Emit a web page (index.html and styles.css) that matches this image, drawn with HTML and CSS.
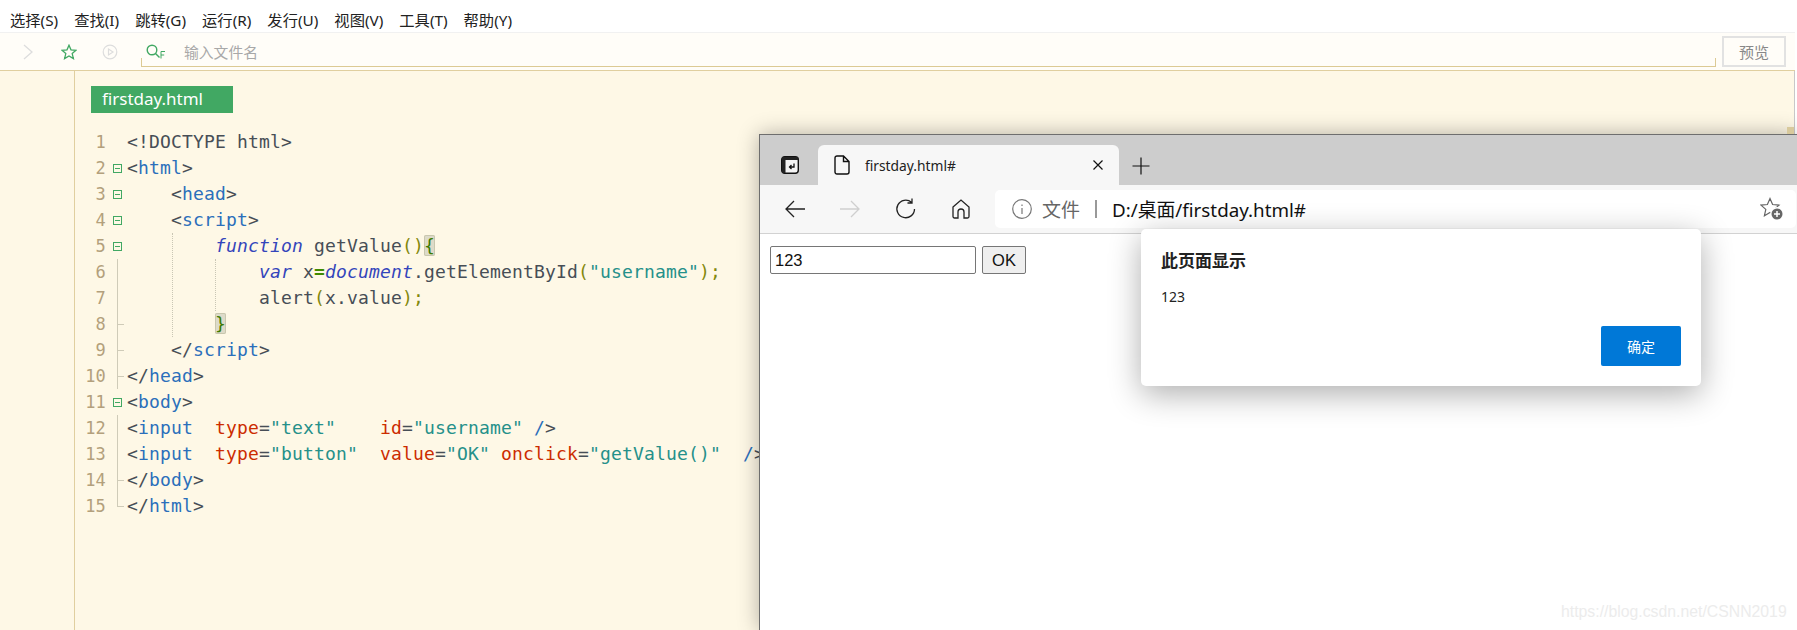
FILE: index.html
```html
<!DOCTYPE html>
<html lang="zh-CN">
<head>
  <meta charset="UTF-8" />
  <title>firstday.html</title>
  <link rel="stylesheet" href="styles.css">
</head>
<body>
  <div class="ide">
    <nav class="menu">
      <span>选择(S)</span><span>查找(I)</span><span>跳转(G)</span><span>运行(R)</span>
      <span>发行(U)</span><span>视图(V)</span><span>工具(T)</span><span>帮助(Y)</span>
    </nav>

    <div class="toolbar">
      <svg class="tool-chevron" width="10" height="16" viewBox="0 0 10 16"><path d="M1 1l8 7-8 7" /></svg>
      <svg class="tool-star" width="16" height="16" viewBox="0 0 16 16"><path d="M8 1.200l2 4.600 5 .5-3.800 3.300 1.200 5-4.400-2.700-4.400 2.700 1.200-5L1 6.300l5-.5z" /></svg>
      <svg class="tool-play" width="16" height="16" viewBox="0 0 16 16"><circle cx="8" cy="8" r="6.800" /><path d="M6.500 5v6L11 8z" /></svg>
      <div class="search">
        <svg class="search-icon" width="20" height="16" viewBox="0 0 20 16"><circle cx="6" cy="6" r="4.800" /><path d="M9.500 9.500l4 4" /><path class="search-f" d="M19 7.500h-4v7M15 11h3.200" /></svg>
        <span class="search-text">输入文件名</span>
      </div>
      <button class="preview">预览</button>
    </div>

    <div class="editor">
      <div class="filetab">firstday.html</div>
      <div class="code">
        <i class="guide guide-a"></i>
        <i class="guide guide-b"></i>
        <div class="row"><span class="ln">1</span><span class="fold"></span><span class="src">&lt;!DOCTYPE html&gt;</span></div>
        <div class="row"><span class="ln">2</span><span class="fold open"></span><span class="src">&lt;<b class="t">html</b>&gt;</span></div>
        <div class="row"><span class="ln">3</span><span class="fold open"></span><span class="src">    &lt;<b class="t">head</b>&gt;</span></div>
        <div class="row"><span class="ln">4</span><span class="fold open"></span><span class="src">    &lt;<b class="t">script</b>&gt;</span></div>
        <div class="row"><span class="ln">5</span><span class="fold open"></span><span class="src">        <b class="k">function</b> getValue<b class="o">()</b><b class="brace">{</b></span></div>
        <div class="row"><span class="ln">6</span><span class="fold bar"></span><span class="src">            <b class="k">var</b> x<b class="eq">=</b><b class="k">document</b>.getElementById<b class="o">(</b><b class="s">"username"</b><b class="o">);</b></span></div>
        <div class="row"><span class="ln">7</span><span class="fold bar"></span><span class="src">            alert<b class="o">(</b>x.value<b class="o">);</b></span></div>
        <div class="row"><span class="ln">8</span><span class="fold bar tick"></span><span class="src">        <b class="brace">}</b></span></div>
        <div class="row"><span class="ln">9</span><span class="fold bar tick"></span><span class="src">    &lt;/<b class="t">script</b>&gt;</span></div>
        <div class="row"><span class="ln">10</span><span class="fold bar tick"></span><span class="src">&lt;/<b class="t">head</b>&gt;</span></div>
        <div class="row"><span class="ln">11</span><span class="fold open"></span><span class="src">&lt;<b class="t">body</b>&gt;</span></div>
        <div class="row"><span class="ln">12</span><span class="fold bar"></span><span class="src">&lt;<b class="t">input</b>  <b class="a">type</b>=<b class="s">"text"</b>    <b class="a">id</b>=<b class="s">"username"</b> <b class="t">/</b>&gt;</span></div>
        <div class="row"><span class="ln">13</span><span class="fold bar"></span><span class="src">&lt;<b class="t">input</b>  <b class="a">type</b>=<b class="s">"button"</b>  <b class="a">value</b>=<b class="s">"OK"</b> <b class="a">onclick</b>=<b class="s">"getValue()"</b>  <b class="t">/</b>&gt;</span></div>
        <div class="row"><span class="ln">14</span><span class="fold bar tick"></span><span class="src">&lt;/<b class="t">body</b>&gt;</span></div>
        <div class="row"><span class="ln">15</span><span class="fold end tick"></span><span class="src">&lt;/<b class="t">html</b>&gt;</span></div>
      </div>
    </div>
  </div>

  <!-- browser window on top of the editor -->
  <div class="browser">
    <div class="tabstrip">
      <svg class="tab-actions" width="18" height="18" viewBox="0 0 18 18">
        <rect x="0.700" y="0.700" width="16.600" height="16.600" rx="3" fill="#f4f4f4" stroke="#111" stroke-width="1.400" />
        <path d="M1 1h16v3H1zM1 4h3.500v13H1z" fill="#222" />
        <path d="M13 7.500v3.500H8.500M10.500 9l-2 2 2 2" fill="none" stroke="#111" stroke-width="1.300" />
      </svg>
      <div class="tab">
        <svg class="doc" width="16" height="20" viewBox="0 0 16 20"><path d="M1 3a2 2 0 0 1 2-2h6.500L15 6.500V17a2 2 0 0 1-2 2H3a2 2 0 0 1-2-2zM9.500 1v5.500H15" /></svg>
        <span class="tab-title">firstday.html#</span>
        <svg class="tab-close" width="10" height="10" viewBox="0 0 10 10"><path d="M.5.500l9 9M9.500.500l-9 9" /></svg>
      </div>
      <svg class="tab-new" width="18" height="18" viewBox="0 0 18 18"><path d="M9 .500v17M.500 9h17" /></svg>
    </div>

    <div class="navbar">
      <svg class="nav-icon" width="20" height="18" viewBox="0 0 20 18"><path d="M20 9H1M9 1L1 9l8 8" /></svg>
      <svg class="nav-icon nav-off" width="20" height="18" viewBox="0 0 20 18"><path d="M0 9h19M11 1l8 8-8 8" /></svg>
      <svg class="nav-icon" width="22" height="22" viewBox="0 0 22 22"><path d="M19.500 11A8.800 8.800 0 1 1 16.500 4.300M17 .500v4.500h-4.500" /></svg>
      <svg class="nav-icon" width="18" height="20" viewBox="0 0 18 20"><path d="M1 8l8-7 8 7v9.500a1.500 1.500 0 0 1-1.500 1.500H12v-6a3 3 0 0 0-6 0v6H2.500A1.500 1.500 0 0 1 1 17.500z" /></svg>
      <div class="address">
        <svg class="info" width="20" height="20" viewBox="0 0 20 20"><circle cx="10" cy="10" r="9.300" /><path d="M10 9v6M10 5.500v1.500" /></svg>
        <span class="scheme">文件</span>
        <i class="divider"></i>
        <span class="url">D:/桌面/firstday.html#</span>
        <svg class="fav" width="24" height="24" viewBox="0 0 24 24">
          <path d="M10 1.500l2.600 6 6.400.6-4.800 4.300 1.400 6.300L10 15.400l-5.600 3.300 1.400-6.300L1 8.100l6.400-.6z" fill="none" stroke="#666" stroke-width="1.200" />
          <circle cx="17" cy="17" r="7" fill="#fff" />
          <circle cx="17" cy="17" r="5.500" fill="#666" />
          <path d="M17 14v6M14 17h6" stroke="#fff" stroke-width="1.500" />
        </svg>
      </div>
    </div>

    <div class="page">
      <input class="page-input" type="text" value="123" />
      <button class="page-button">OK</button>
    </div>

    <div class="dialog">
      <div class="dialog-title">此页面显示</div>
      <div class="dialog-text">123</div>
      <div class="dialog-actions"><button class="dialog-ok">确定</button></div>
    </div>
  </div>

  <span class="scroll-bit"></span>
  <span class="watermark">https://blog.csdn.net/CSNN2019</span>
</body>
</html>
```
FILE: styles.css
```css
html, body {
  margin: 0;
  height: 630px;
  overflow: hidden;
  background: #fff;
}
body {
  position: relative;
  font-family: "Noto Sans", "Noto Sans CJK SC", sans-serif;
}
.ide {
  width: 1795px;
  height: 630px;
  display: flex;
  flex-direction: column;
}

/* menu */
.menu {
  height: 33px;
  flex: none;
  display: flex;
  align-items: center;
  gap: 16px;
  padding: 6px 0 0 10px;
  box-sizing: border-box;
  background: #fff;
  border-bottom: 1px solid #f1f1f1;
  font-size: 15.300px;
  color: #222;
}

/* toolbar */
.toolbar {
  height: 37px;
  flex: none;
  display: flex;
  align-items: center;
  padding-left: 23px;
  background: #fffdf8;
  border-bottom: 1px solid #e0cf9f;
}
.tool-chevron path {
  fill: none;
  stroke: #ddd;
  stroke-width: 1.300;
}
.tool-star {
  margin-left: 28px;
}
.tool-star path {
  fill: none;
  stroke: #41a863;
  stroke-width: 1.300;
}
.tool-play {
  margin-left: 25px;
}
.tool-play circle, .tool-play path {
  fill: none;
  stroke: #ddd;
  stroke-width: 1.200;
}
.search {
  margin-left: 23px;
  width: 1573px;
  height: 8px;
  align-self: flex-end;
  margin-bottom: 3px;
  position: relative;
  display: flex;
  border: 1px solid #dcca94;
  border-top: none;
}
.search-icon {
  position: absolute;
  left: 4px;
  top: -14px;
}
.search-icon circle, .search-icon path {
  fill: none;
  stroke: #41a863;
  stroke-width: 1.400;
}
.search-icon .search-f {
  stroke-width: 1;
}
.search-text {
  position: absolute;
  left: 42px;
  top: -19px;
  font-size: 14.800px;
  line-height: 26px;
  white-space: nowrap;
  color: #a8a8a8;
}
.preview {
  width: 64px;
  height: 31px;
  margin-left: 6px;
  padding: 0;
  background: #fffdf8;
  border: 2px solid #e2e2e2;
  font: 15px "Noto Sans CJK SC", sans-serif;
  color: #888;
}

/* editor */
.editor {
  flex: 1;
  padding: 15px 0 0 91px;
  position: relative;
  background: #fef8e6;
  border-right: 1px solid #c8c8c8;
}
.editor::before {
  content: "";
  position: absolute;
  left: 74px;
  top: 0;
  bottom: 0;
  border-left: 1px solid #e0cf9f;
}
.filetab {
  width: 131px;
  height: 27px;
  padding-left: 11px;
  background: #41a863;
  color: #fff;
  font-size: 17px;
  line-height: 26px;
}
.code {
  position: relative;
  margin: 16px 0 0 -91px;
  font-family: "DejaVu Sans Mono", monospace;
  font-size: 18px;
  letter-spacing: 0.160px;
  color: #474e56;
}
.row {
  display: flex;
  height: 26px;
  line-height: 26px;
}
.ln {
  width: 106px;
  flex: none;
  text-align: right;
  color: #b3a07c;
  font-size: 17px;
}
.fold {
  width: 21px;
  flex: none;
  position: relative;
}
.src {
  white-space: pre;
}
.src b {
  font-weight: normal;
}
.t { color: #2b6fbb; }
.a { color: #cc2c00; }
.s { color: #25908a; }
.k { color: #3345bb; font-style: italic; }
.o { color: #83880c; }
.src .eq { color: #3f8a00; font-weight: bold; }
.brace {
  color: #3c7a00;
  background: #dddbc9;
  border-radius: 2px;
  box-shadow: inset 0 0 0 1px #c9c7ae;
}

/* fold markers */
.open::before {
  content: "";
  position: absolute;
  left: 7px;
  top: 9px;
  width: 7px;
  height: 7px;
  border: 1px solid #41a863;
}
.open::after {
  content: "";
  position: absolute;
  left: 9px;
  top: 13px;
  width: 5px;
  border-top: 1px solid #41a863;
}
.bar::before {
  content: "";
  position: absolute;
  left: 11px;
  top: 0;
  bottom: 0;
  border-left: 1px solid #cfcbb8;
}
.end::before {
  content: "";
  position: absolute;
  left: 11px;
  top: 0;
  height: 13px;
  border-left: 1px solid #cfcbb8;
}
.tick::after {
  content: "";
  position: absolute;
  left: 11px;
  top: 13px;
  width: 7px;
  border-top: 1px solid #cfcbb8;
}
.guide {
  position: absolute;
  border-left: 1px dotted #c9c6b4;
}
.guide-a {
  left: 172px;
  top: 104px;
  height: 104px;
}
.guide-b {
  left: 215px;
  top: 130px;
  height: 52px;
}

/* browser window */
.browser {
  position: absolute;
  left: 759px;
  top: 134px;
  right: 0;
  bottom: 0;
  background: #fff;
  border-left: 1px solid #6e6e6e;
  border-top: 1px solid #6e6e6e;
  box-shadow: 0 0 20px rgba(0, 0, 0, 0.3);
}
.tabstrip {
  height: 50px;
  display: flex;
  align-items: flex-end;
  background: #cdcdcd;
}
.tab-actions {
  margin: 0 0 11px 21px;
}
.tab {
  width: 301px;
  height: 40px;
  margin-left: 19px;
  display: flex;
  align-items: center;
  background: #f7f7f7;
  border-radius: 6px 6px 0 0;
  box-sizing: border-box;
  padding: 0 16px;
}
.doc path {
  fill: none;
  stroke: #111;
  stroke-width: 1.400;
}
.tab-title {
  margin-left: 15px;
  flex: 1;
  font-size: 13.800px;
  color: #222;
}
.tab-close path, .tab-new path {
  fill: none;
  stroke: #111;
  stroke-width: 1.200;
}
.tab-new {
  margin: 0 0 10px 13px;
}
.navbar {
  height: 47px;
  display: flex;
  align-items: center;
  padding-bottom: 1px;
  background: #f7f7f7;
  border-bottom: 1px solid #d2d2d2;
}
.nav-icon {
  margin-left: 35px;
  flex: none;
}
.nav-icon:first-child {
  margin-left: 25px;
}
.nav-icon path {
  fill: none;
  stroke: #222;
  stroke-width: 1.300;
}
.nav-off path {
  stroke: #cfcfcf;
}
.address {
  margin: 0 1px 0 25px;
  height: 38px;
  flex: 1;
  display: flex;
  align-items: center;
  background: #fff;
  border-radius: 5px;
  padding-left: 17px;
  position: relative;
}
.info circle, .info path {
  fill: none;
  stroke: #777;
  stroke-width: 1.200;
}
.scheme {
  margin-left: 10px;
  font-size: 19px;
  color: #666;
}
.divider {
  width: 2px;
  height: 18px;
  margin: 0 15px;
  background: #999;
}
.url {
  font-size: 18.800px;
  color: #111;
  white-space: nowrap;
}
.fav {
  position: absolute;
  right: 12px;
  top: 7px;
}
.page {
  display: flex;
  padding: 12px 0 0 10px;
  gap: 6px;
}
.page-input {
  width: 206px;
  height: 28px;
  box-sizing: border-box;
  padding: 0 4px;
  border: 1px solid #767676;
  border-radius: 2px;
  font: 16.500px "Liberation Sans", sans-serif;
  color: #111;
}
.page-button {
  width: 44px;
  height: 28px;
  padding: 0;
  background: #efefef;
  border: 1px solid #767676;
  border-radius: 2px;
  font: 16.500px "Liberation Sans", sans-serif;
  color: #111;
}
.dialog {
  position: absolute;
  left: 381px;
  top: 94px;
  width: 560px;
  height: 157px;
  box-sizing: border-box;
  padding: 20px;
  background: #fff;
  border-radius: 5px;
  box-shadow: 0 8px 32px rgba(0, 0, 0, 0.32);
}
.dialog-title {
  font-size: 17px;
  line-height: 24px;
  font-weight: bold;
  color: #222;
}
.dialog-text {
  margin-top: 14px;
  font-size: 14px;
  line-height: 20px;
  color: #222;
}
.dialog-actions {
  display: flex;
  justify-content: flex-end;
  margin-top: 19px;
}
.dialog-ok {
  width: 80px;
  height: 40px;
  padding: 0;
  border: none;
  border-radius: 2px;
  background: #0078d7;
  color: #fff;
  font: 14px "Noto Sans CJK SC", sans-serif;
}

.scroll-bit {
  position: absolute;
  left: 1787px;
  top: 127px;
  width: 7px;
  height: 7px;
  background: #d8c99c;
}
.watermark {
  position: absolute;
  left: 1561px;
  top: 603px;
  font: 15.800px "Liberation Sans", sans-serif;
  color: #ececec;
}
```
